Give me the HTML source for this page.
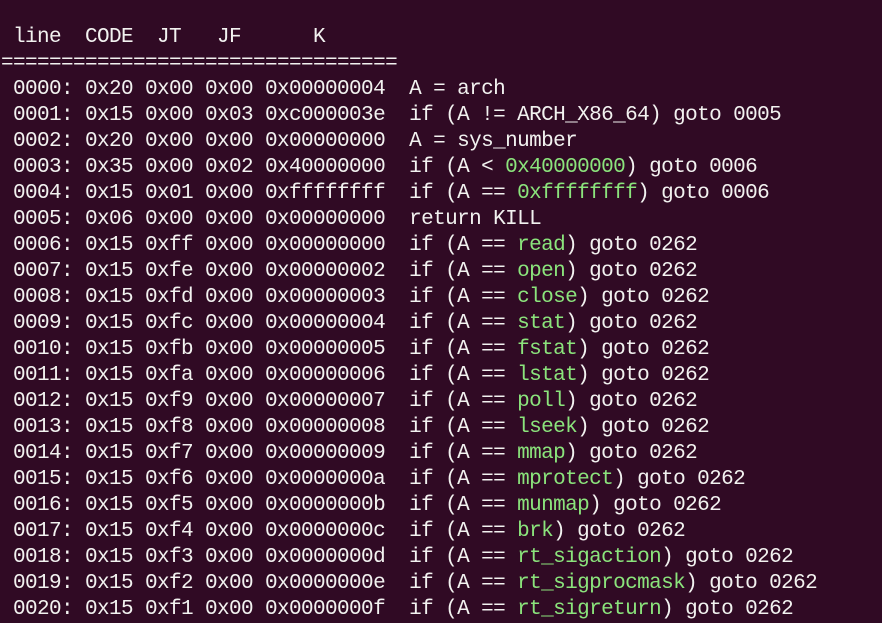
<!DOCTYPE html>
<html><head><meta charset="utf-8"><style>
html,body{margin:0;padding:0;width:882px;height:601px;overflow:hidden;background:#300a24;}
pre{position:absolute;left:1px;top:25px;margin:0;font-family:"Liberation Mono","DejaVu Sans Mono",monospace;font-size:21px;letter-spacing:-0.6px;line-height:26px;color:#f2f2f0;}
.g{color:#8be47c;}
</style></head><body><pre> line  CODE  JT   JF      K
=================================
 0000: 0x20 0x00 0x00 0x00000004  A = arch
 0001: 0x15 0x00 0x03 0xc000003e  if (A != ARCH_X86_64) goto 0005
 0002: 0x20 0x00 0x00 0x00000000  A = sys_number
 0003: 0x35 0x00 0x02 0x40000000  if (A &lt; <span class="g">0x40000000</span>) goto 0006
 0004: 0x15 0x01 0x00 0xffffffff  if (A == <span class="g">0xffffffff</span>) goto 0006
 0005: 0x06 0x00 0x00 0x00000000  return KILL
 0006: 0x15 0xff 0x00 0x00000000  if (A == <span class="g">read</span>) goto 0262
 0007: 0x15 0xfe 0x00 0x00000002  if (A == <span class="g">open</span>) goto 0262
 0008: 0x15 0xfd 0x00 0x00000003  if (A == <span class="g">close</span>) goto 0262
 0009: 0x15 0xfc 0x00 0x00000004  if (A == <span class="g">stat</span>) goto 0262
 0010: 0x15 0xfb 0x00 0x00000005  if (A == <span class="g">fstat</span>) goto 0262
 0011: 0x15 0xfa 0x00 0x00000006  if (A == <span class="g">lstat</span>) goto 0262
 0012: 0x15 0xf9 0x00 0x00000007  if (A == <span class="g">poll</span>) goto 0262
 0013: 0x15 0xf8 0x00 0x00000008  if (A == <span class="g">lseek</span>) goto 0262
 0014: 0x15 0xf7 0x00 0x00000009  if (A == <span class="g">mmap</span>) goto 0262
 0015: 0x15 0xf6 0x00 0x0000000a  if (A == <span class="g">mprotect</span>) goto 0262
 0016: 0x15 0xf5 0x00 0x0000000b  if (A == <span class="g">munmap</span>) goto 0262
 0017: 0x15 0xf4 0x00 0x0000000c  if (A == <span class="g">brk</span>) goto 0262
 0018: 0x15 0xf3 0x00 0x0000000d  if (A == <span class="g">rt_sigaction</span>) goto 0262
 0019: 0x15 0xf2 0x00 0x0000000e  if (A == <span class="g">rt_sigprocmask</span>) goto 0262
 0020: 0x15 0xf1 0x00 0x0000000f  if (A == <span class="g">rt_sigreturn</span>) goto 0262
</pre></body></html>
